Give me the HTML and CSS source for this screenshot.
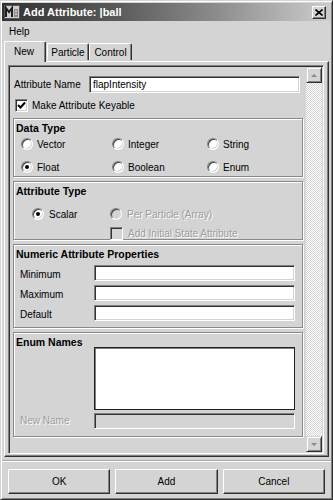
FILE: index.html
```html
<!DOCTYPE html>
<html>
<head>
    <title>Add Attribute: |ball</title>
    <link rel="stylesheet" href="styles.css">
</head>
<body>
    <div class="window">
        <div class="titlebar">
            <svg class="app-icon" width="16" height="14" viewBox="0 0 16 14">
                <rect x="0.5" y="0.5" width="15" height="13" fill="#cfcfcf" stroke="#555"/>
                <path d="M2 12 V3 L5 7 L8 3 V12" fill="none" stroke="#1e1e1e" stroke-width="2"/>
                <path d="M10 4 h4 v8 h-4 z" fill="#8a8a8a"/>
                <path d="M11 6 h2 M11 9 h2" stroke="#f0f0f0"/>
            </svg>
            <span class="title">Add Attribute: |ball</span>
            <div class="close-btn">
                <svg width="8" height="7" viewBox="0 0 8 7">
                    <path d="M0.5 0.5 L7.5 6.5 M7.5 0.5 L0.5 6.5" stroke="#000" stroke-width="1.6"/>
                </svg>
            </div>
        </div>

        <div class="menubar">
            <span class="menu-item">Help</span>
        </div>

        <div class="tabs">
            <div class="tab active">New</div>
            <div class="tab">Particle</div>
            <div class="tab">Control</div>
        </div>

        <div class="tab-panel">
            <div class="scroll-frame">
                <div class="scroll-content">
                    <div class="name-row">
                        <span class="name-label">Attribute Name</span>
                        <div class="field name-field">flapIntensity</div>
                    </div>
                    <div class="check-row">
                        <span class="checkbox">
                            <svg width="9" height="9" viewBox="0 0 9 9">
                                <path d="M1 4 L3.5 6.5 L8 1.5" fill="none" stroke="#000" stroke-width="2"/>
                            </svg>
                        </span>
                        <span>Make Attribute Keyable</span>
                    </div>

                    <div class="group data-type">
                        <div class="group-title">Data Type</div>
                        <div class="radio-grid">
                            <div class="option"><span class="radio"></span>Vector</div>
                            <div class="option"><span class="radio"></span>Integer</div>
                            <div class="option"><span class="radio"></span>String</div>
                            <div class="option"><span class="radio checked"></span>Float</div>
                            <div class="option"><span class="radio"></span>Boolean</div>
                            <div class="option"><span class="radio"></span>Enum</div>
                        </div>
                    </div>

                    <div class="group attr-type">
                        <div class="group-title">Attribute Type</div>
                        <div class="attr-grid">
                            <div class="option scalar"><span class="radio checked"></span>Scalar</div>
                            <div class="option disabled"><span class="radio off"></span>Per Particle (Array)</div>
                            <div></div>
                            <div class="option disabled"><span class="checkbox off"></span>Add Initial State Attribute</div>
                        </div>
                    </div>

                    <div class="group numeric">
                        <div class="group-title">Numeric Attribute Properties</div>
                        <div class="prop-row">
                            <span class="prop-label">Minimum</span>
                            <div class="field prop-field"></div>
                        </div>
                        <div class="prop-row">
                            <span class="prop-label">Maximum</span>
                            <div class="field prop-field"></div>
                        </div>
                        <div class="prop-row">
                            <span class="prop-label">Default</span>
                            <div class="field prop-field"></div>
                        </div>
                    </div>

                    <div class="group enum">
                        <div class="group-title">Enum Names</div>
                        <div class="enum-list"></div>
                        <div class="prop-row new-name">
                            <span class="prop-label disabled">New Name</span>
                            <div class="field prop-field off"></div>
                        </div>
                    </div>
                </div>

                <div class="scrollbar">
                    <div class="scroll-btn"><span class="arrow up"></span></div>
                    <div class="scroll-track"></div>
                    <div class="scroll-btn"><span class="arrow down"></span></div>
                </div>
            </div>
        </div>

        <div class="buttons">
            <div class="btn">OK</div>
            <div class="btn">Add</div>
            <div class="btn">Cancel</div>
        </div>
    </div>
</body>
</html>
```

FILE: styles.css
```css
body {
    margin: 0;
    font-family: "Liberation Sans", Arial, sans-serif;
    font-size: 10px;
    color: #000;
    background: #fff;
}

.window {
    width: 333px;
    height: 500px;
    box-sizing: border-box;
    padding: 1px;
    background: #d4d4d4;
    border: 1px solid;
    border-color: #d4d4d4 #303030 #303030 #d4d4d4;
    box-shadow: inset 1px 1px #fff, inset -1px -1px #808080;
    display: flex;
    flex-direction: column;
}

/* title bar */
.titlebar {
    height: 18px;
    margin-top: 1px;
    padding-left: 2px;
    display: flex;
    align-items: center;
    background: linear-gradient(to right, #323232 0%, #5a5a5a 35%, #8c8c8c 65%, #cdcdcd 100%);
}

.app-icon {
    display: block;
}

.title {
    margin-left: 3px;
    color: #fff;
    font-weight: bold;
    font-size: 11px;
}

.close-btn {
    margin-left: auto;
    margin-right: 5px;
    width: 12px;
    height: 11px;
    background: #d4d4d4;
    border: 1px solid;
    border-color: #fff #303030 #303030 #fff;
    box-shadow: inset -1px -1px #808080;
    display: flex;
    align-items: center;
    justify-content: center;
}

/* menu */
.menubar {
    height: 19px;
    padding-left: 7px;
    display: flex;
    align-items: center;
    padding-top: 2px;
    box-sizing: border-box;
}

/* tabs */
.tabs {
    height: 21px;
    padding-left: 2px;
    display: flex;
    align-items: flex-end;
    position: relative;
    z-index: 1;
}

.tab {
    height: 17px;
    line-height: 17px;
    text-align: center;
    box-sizing: border-box;
    border: 1px solid;
    border-bottom: none;
    border-color: #fff #303030 #fff #fff;
    box-shadow: inset -1px 0 #808080;
    border-radius: 2px 2px 0 0;
    margin-bottom: 1px;
}

.tab:nth-child(1) {
    width: 42px;
}

.tab:nth-child(2) {
    width: 42px;
    margin-left: 1px;
}

.tab:nth-child(3) {
    width: 43px;
}

.tab.active {
    height: 21px;
    line-height: 19px;
    margin-bottom: -1px;
    background: #d4d4d4;
    padding-right: 2px;
}

/* panel */
.tab-panel {
    height: 396px;
    margin: 0 2px;
    box-sizing: border-box;
    padding: 3px 3px 2px 3px;
    border: 1px solid;
    border-color: #fff #303030 #303030 #fff;
    box-shadow: inset -1px -1px #808080;
    display: flex;
}

.scroll-frame {
    flex: 1;
    margin-right: 1px;
    border: 1px solid;
    border-color: #808080 #fff #fff #808080;
    box-shadow: inset 1px 1px #303030, inset -1px -1px #d4d4d4;
    padding: 1px;
    display: flex;
}

.scroll-content {
    flex: 1;
    display: flex;
    flex-direction: column;
}

.name-row {
    margin-top: 9px;
    height: 17px;
    display: flex;
    align-items: center;
}

.name-label {
    width: 75px;
    padding-left: 4px;
}

.field {
    box-sizing: border-box;
    background: #fff;
    border: 1px solid;
    border-color: #808080 #fff #fff #808080;
    box-shadow: inset 1px 1px #303030, inset -1px -1px #d4d4d4;
}

.name-field {
    width: 211px;
    height: 17px;
    line-height: 15px;
    padding-left: 3px;
}

.check-row {
    margin-top: 6px;
    height: 13px;
    padding-left: 5px;
    display: flex;
    align-items: center;
    gap: 4px;
}

.checkbox {
    width: 13px;
    height: 13px;
    box-sizing: border-box;
    background: #fff;
    border: 1px solid;
    border-color: #808080 #fff #fff #808080;
    box-shadow: inset 1px 1px #303030, inset -1px -1px #d4d4d4;
    display: flex;
    align-items: center;
    justify-content: center;
}

.checkbox.off {
    background: #d4d4d4;
}

/* groups */
.group {
    margin: 4px 3px 0 3px;
    border: 1px solid #8a8a8a;
    box-shadow: inset 1px 1px #fff, 1px 1px #fff;
    padding-top: 2px;
}

.data-type {
    margin-top: 6px;
    height: 59px;
    box-sizing: border-box;
}

.group-title {
    height: 14px;
    line-height: 14px;
    padding-left: 2px;
    font-weight: bold;
    font-size: 10.5px;
}

.option {
    height: 12px;
    display: flex;
    align-items: center;
    gap: 4px;
}

.radio {
    width: 12px;
    height: 12px;
    box-sizing: border-box;
    border-radius: 50%;
    background: #fff;
    border: 1px solid;
    border-color: #808080 #fff #fff #808080;
    box-shadow: inset 1px 1px #404040, inset -1px -1px #d4d4d4;
    display: flex;
    align-items: center;
    justify-content: center;
}

.radio.checked::after {
    content: "";
    width: 4px;
    height: 4px;
    border-radius: 50%;
    background: #000;
}

.radio.off {
    background: #d4d4d4;
}

.radio-grid {
    margin-top: 3px;
    padding-left: 7px;
    display: grid;
    grid-template-columns: 91px 95px auto;
    row-gap: 11px;
}

.attr-type {
    height: 59px;
    box-sizing: border-box;
}

.attr-grid {
    margin-top: 10px;
    padding-left: 18px;
    display: grid;
    grid-template-columns: 78px auto;
    row-gap: 7px;
}

.scalar {
    gap: 5px;
}

.attr-grid .disabled {
    gap: 5px;
}

.disabled {
    color: #9c9c9c;
    text-shadow: 1px 1px #fff;
}

.numeric {
    height: 84px;
    box-sizing: border-box;
}

.prop-row {
    display: flex;
    align-items: flex-end;
    margin-top: 4px;
    padding-left: 6px;
}

.numeric .prop-row:first-of-type {
    margin-top: 2px;
}

.prop-label {
    width: 74px;
    line-height: 12px;
}

.prop-field {
    width: 201px;
    height: 16px;
}

.enum {
    height: 105px;
    box-sizing: border-box;
}

.enum .group-title {
    margin-bottom: -2px;
}

.enum-list {
    margin-left: 80px;
    width: 201px;
    height: 63px;
    box-sizing: border-box;
    background: #fff;
    border: 1px solid #202020;
    box-shadow: inset 1px 1px #808080;
}

.new-name {
    margin-top: 3px;
    align-items: center;
}

.prop-field.off {
    background: #d4d4d4;
}

/* scrollbar */
.scrollbar {
    width: 16px;
    display: flex;
    flex-direction: column;
}

.scroll-btn {
    height: 16px;
    box-sizing: border-box;
    background: #d4d4d4;
    border: 1px solid;
    border-color: #d4d4d4 #303030 #303030 #d4d4d4;
    box-shadow: inset 1px 1px #fff, inset -1px -1px #808080;
    display: flex;
    align-items: center;
    justify-content: center;
}

.arrow {
    width: 0;
    height: 0;
    border-left: 3px solid transparent;
    border-right: 3px solid transparent;
}

.arrow.up {
    border-bottom: 3px solid #8a8a8a;
}

.arrow.down {
    border-top: 3px solid #8a8a8a;
}

.scroll-track {
    flex: 1;
    background: repeating-conic-gradient(#d4d4d4 0 25%, #fff 0 50%) 0 0 / 2px 2px;
}

/* bottom buttons */
.buttons {
    margin-top: 3px;
    padding: 8px 6px 0 6px;
    border-top: 1px solid #a8a8a8;
    box-shadow: inset 0 1px #fff;
    display: flex;
    gap: 5px;
}

.btn {
    flex: 1;
    height: 25px;
    line-height: 23px;
    box-sizing: border-box;
    text-align: center;
    background: #d4d4d4;
    border: 1px solid;
    border-color: #fff #303030 #303030 #fff;
    box-shadow: inset -1px -1px #808080;
}
```
